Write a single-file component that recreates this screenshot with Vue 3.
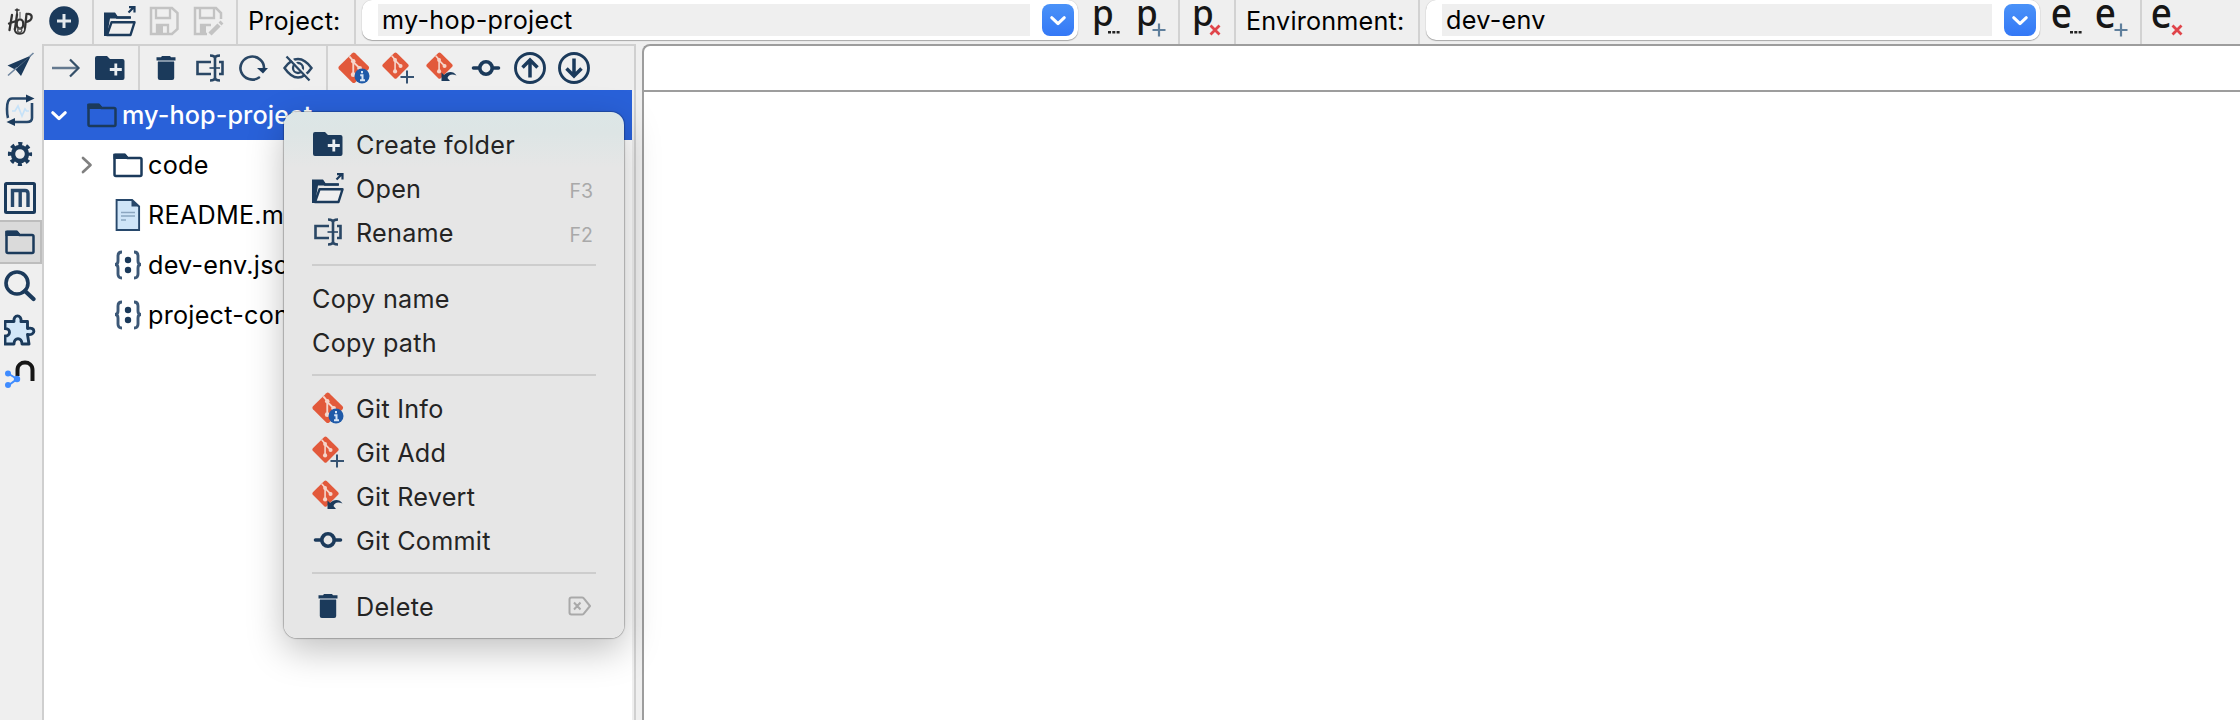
<script setup>
const fileActions = ['open', 'save', 'saveas']
const perspectives = ['plane', 'loop', 'gear', 'meta', 'folder', 'search', 'puzzle', 'neo']
const treeTools = [
  ['arrow', 'newfolder'],
  ['trash', 'rename', 'refresh', 'hide'],
  ['gitinfo', 'gitadd', 'gitrevert', 'commit', 'up', 'down'],
]
const files = [
  { icon: 'folder', name: 'code', dir: true },
  { icon: 'file', name: 'README.md' },
  { icon: 'json', name: 'dev-env.json' },
  { icon: 'json', name: 'project-config.json' },
]
const menu = [
  [
    { icon: 'newfolder', text: 'Create folder' },
    { icon: 'open', text: 'Open', key: 'F3' },
    { icon: 'rename', text: 'Rename', key: 'F2' },
  ],
  [{ text: 'Copy name' }, { text: 'Copy path' }],
  [
    { icon: 'gitinfo', text: 'Git Info' },
    { icon: 'gitadd', text: 'Git Add' },
    { icon: 'gitrevert', text: 'Git Revert' },
    { icon: 'commit', text: 'Git Commit' },
  ],
  [{ icon: 'trash', text: 'Delete', del: true }],
]
</script>

<template>
  <div class="window">
    <svg class="defs" width="0" height="0">
      <symbol id="hop" viewBox="0 0 32 32">
        <g fill="none" stroke="#333" stroke-width="2.300" stroke-linecap="round">
          <path d="M8 10L5.500 25M13 9.500L11 24M5 18.500l7-2.500" />
          <ellipse cx="16" cy="19" rx="3.300" ry="4.600" />
          <path d="M13 4v6M11.500 5h3.500" stroke-width="1.600" />
          <path d="M16 7.500v5" stroke-width="1.300" stroke="#777" />
          <path d="M22.500 9l-1.500 14M22.500 9c7-1.500 7 7-.5 8" />
          <path d="M10.500 24c1 6.500 10 6.500 10.500 0" stroke-width="1.700" />
          <circle cx="15.700" cy="25.500" r="2" stroke-width="1.400" stroke="#555" />
        </g>
      </symbol>
      <symbol id="add" viewBox="0 0 32 32">
        <circle cx="16" cy="16" r="14.800" fill="#1b3a5b" />
        <path d="M16 9v14M9 16h14" stroke="#e4e9ee" stroke-width="3" />
      </symbol>
      <symbol id="open" viewBox="0 0 32 32">
        <path d="M1.500 30.500V9.500h9l2.500 3h14" fill="none" stroke="#1b3a5b" stroke-width="2.500" />
        <path d="M0 7.500h11l2.500 4H26v2H6L3 31H0z" fill="#1b3a5b" />
        <path d="M7.500 17.300h23L26.500 30H3z" fill="#efefef" stroke="#1b3a5b" stroke-width="2.400" stroke-linejoin="round" />
        <path d="M24.500 7.500l5-5M25 2.200h5.500V7.500" fill="none" stroke="#1b3a5b" stroke-width="2.200" />
      </symbol>
      <symbol id="save" viewBox="0 0 32 32">
        <path d="M3 3h21l5.500 5v16l-5.500 5H3z" fill="none" stroke="#c3c3c3" stroke-width="2.500" />
        <path d="M8 3v10h14V3M9 29v-9h11v9" fill="none" stroke="#c3c3c3" stroke-width="2.300" />
        <path d="M9 20h6v9H9z" fill="#c3c3c3" />
      </symbol>
      <symbol id="saveas" viewBox="0 0 32 32">
        <path d="M15 29H3V3h21l5 5v6" fill="none" stroke="#c3c3c3" stroke-width="2.500" />
        <path d="M8 3v10h14V3M9 29v-9h10" fill="none" stroke="#c3c3c3" stroke-width="2.300" />
        <path d="M9 20h5v9H9z" fill="#c3c3c3" />
        <path d="M18 29l9-9" stroke="#c3c3c3" stroke-width="4.500" />
        <path d="M28 19l2-2" stroke="#c3c3c3" stroke-width="4" />
      </symbol>
      <symbol id="plane" viewBox="0 0 32 32">
        <path d="M27 5.500L3.500 15.500l7.500 4zM27 5.500L11.500 19.500l5.500 6.500z" fill="#1b3a5b" />
        <path d="M4 25.500l9-8M25 7l4.500-4" stroke="#7187a0" stroke-width="1.600" />
      </symbol>
      <symbol id="loop" viewBox="0 0 32 32">
        <g fill="none" stroke="#27486b" stroke-width="2.600">
          <path d="M4 24q-1-3-1-9Q3 4.500 8 4.500H24M28 9v15q0 4-5 4H9" />
        </g>
        <path d="M22 0.500l8.500 4-8.500 4zM11 24l-8.500 4 8.500 4z" fill="#1b3a5b" />
        <path d="M8 17h3l3-5 4 10 3-7 1.500 2H25" fill="none" stroke="#c6e2f8" stroke-width="1.700" />
      </symbol>
      <symbol id="gear" viewBox="0 0 32 32">
        <circle cx="16" cy="16" r="7" fill="none" stroke="#1b3a5b" stroke-width="4.400" />
        <circle cx="16" cy="16" r="10.200" fill="none" stroke="#1b3a5b" stroke-width="3.800" stroke-dasharray="4 4.011" stroke-dashoffset="2" />
      </symbol>
      <symbol id="meta" viewBox="0 0 32 32">
        <rect x="1.500" y="1.500" width="29" height="29" rx="1" fill="none" stroke="#1b3a5b" stroke-width="3" />
        <path d="M8.500 25V8.500H21q3 0 3 3V25M16.200 9v16" fill="none" stroke="#27486b" stroke-width="3.400" />
      </symbol>
      <symbol id="folder" viewBox="0 0 32 32">
        <path d="M2.500 6H13l2.500 3H28q1.500 0 1.500 1.500V25.500q0 1.500-1.500 1.500H4q-1.500 0-1.500-1.500z" fill="none" stroke="#1b3a5b" stroke-width="2.500" />
        <path d="M1.500 6q0-1.500 1.500-1.500h10l3 3.500v2H1.500z" fill="#1b3a5b" />
      </symbol>
      <symbol id="search" viewBox="0 0 32 32">
        <circle cx="13" cy="13" r="11" fill="none" stroke="#1b3a5b" stroke-width="3.600" />
        <path d="M21 21l8.500 8" stroke="#1b3a5b" stroke-width="4.200" stroke-linecap="round" />
      </symbol>
      <symbol id="puzzle" viewBox="0 0 32 32">
        <path d="M1 7.500h9C9 0 18 0 17 7.500h6.500v7C32 12 32 22 23.500 20.500L25 30h-7c0-7-8-7-8 0H1v-8c6 0 6-7.500 0-7.500z" fill="#d3e7f8" stroke="#1b3a5b" stroke-width="2.900" stroke-linejoin="round" />
      </symbol>
      <symbol id="neo" viewBox="0 0 32 32">
        <path d="M13.500 18v-6c0-10 15-10 15 0v11" fill="none" stroke="#161616" stroke-width="4" />
        <path d="M5 16l8 5-8 6" fill="none" stroke="#3f8cff" stroke-width="2" />
        <g fill="#3f8cff"><circle cx="4" cy="15.500" r="3" /><circle cx="13" cy="21" r="3.200" /><circle cx="4" cy="27" r="3" /></g>
      </symbol>
      <symbol id="arrow" viewBox="0 0 32 32">
        <path d="M2 16h25" stroke="#64798f" stroke-width="2.500" />
        <path d="M20 7.500l8.500 8.500-8.500 8.500" fill="none" stroke="#355069" stroke-width="2.200" />
      </symbol>
      <symbol id="newfolder" viewBox="0 0 32 32">
        <path d="M1 6q0-2 2-2h10l3 3h12.500q2 0 2 2v17q0 2-2 2H3q-2 0-2-2z" fill="#1b3a5b" />
        <path d="M21.800 11.500v12M15.800 17.500h12" stroke="#eaeef2" stroke-width="2.800" />
      </symbol>
      <symbol id="trash" viewBox="0 0 32 32">
        <path d="M12 4h8l1 1.200h4.500v3.200h-19V5.200H11z" fill="#1b3a5b" />
        <path d="M7.800 10h16.400v16q0 2-2 2H9.800q-2 0-2-2z" fill="#1b3a5b" />
        <path d="M8 9.200h16" stroke="#8294a8" stroke-width="1.600" />
      </symbol>
      <symbol id="rename" viewBox="0 0 32 32">
        <path d="M17 10H3.500v12H17M25 10h3.500v12H25" fill="none" stroke="#2a4765" stroke-width="2.600" />
        <path d="M16 3.500q5 0 5 3v19q0 3-5 3M26 3.500q-5 0-5 3M26 28.500q-5 0-5-3" fill="none" stroke="#2a4765" stroke-width="2.600" />
        <path d="M15.500 16H26" stroke="#2a4765" stroke-width="1.600" />
      </symbol>
      <symbol id="refresh" viewBox="0 0 32 32">
        <path d="M26 17A11.800 11.500 0 1 0 21 25.500" fill="none" stroke="#2a4765" stroke-width="2.600" stroke-linecap="round" />
        <path d="M19 16h11l-5 5.500z" fill="#1b3a5b" />
      </symbol>
      <symbol id="hide" viewBox="0 0 32 32">
        <path d="M2.500 16Q9 7 16 7T29.500 16Q23 25.500 16 25.500T2.500 16z" fill="none" stroke="#2a4765" stroke-width="2.400" />
        <circle cx="16" cy="16" r="5" fill="none" stroke="#2a4765" stroke-width="2.300" />
        <path d="M6.500 3.500l22 24" stroke="#efefef" stroke-width="2.200" />
        <path d="M4.500 4.500l23 24" stroke="#2a4765" stroke-width="2.300" />
      </symbol>
      <symbol id="gitmark" viewBox="0 0 32 32">
        <path d="M14.500 1.200q1.500-1.200 3 0L31 14.500q1.200 1.500 0 3L17.500 31q-1.500 1.200-3 0L1 17.500q-1.200-1.500 0-3z" fill="#e2593b" />
        <path d="M11.500 4.500l4 4.500v15M15.500 10l6.500 6.500" fill="none" stroke="#f5d5cb" stroke-width="1.900" />
        <g fill="#f5d5cb"><circle cx="15.500" cy="9.500" r="2.300" /><circle cx="15.500" cy="23" r="2.500" /><circle cx="22" cy="16.500" r="2.400" /></g>
      </symbol>
      <symbol id="gitinfo" viewBox="0 0 32 32">
        <use href="#gitmark" x="0" y="0" width="31.500" height="31.500" />
        <circle cx="24" cy="24" r="7.500" fill="#1f5aa8" />
        <path d="M24 19v2.200M22.200 23.200H24.500v5M22 28.300h5" stroke="#d8e5f5" stroke-width="2" fill="none" />
      </symbol>
      <symbol id="gitadd" viewBox="0 0 32 32">
        <use href="#gitmark" x="0" y="0" width="27" height="27" />
        <path d="M25 18.500v13M18.500 25h13.500" stroke="#365372" stroke-width="2" />
      </symbol>
      <symbol id="gitrevert" viewBox="0 0 32 32">
        <use href="#gitmark" x="0" y="0" width="27" height="27" />
        <path d="M15.500 20.500v8.500h8.500l-2.500-3c1-3 4-4.500 9-2.500-3-4.500-8.500-4.500-12.500-.5z" fill="#1b3a5b" />
      </symbol>
      <symbol id="commit" viewBox="0 0 32 32">
        <path d="M3.500 16H9M23 16h5.500" stroke="#1b3a5b" stroke-width="3.600" stroke-linecap="round" />
        <circle cx="16" cy="16" r="6.200" fill="none" stroke="#1b3a5b" stroke-width="3.600" />
      </symbol>
      <symbol id="up" viewBox="0 0 32 32">
        <circle cx="16" cy="16" r="14.500" fill="none" stroke="#1b3a5b" stroke-width="2.900" />
        <path d="M16 25.500V8M8.500 15.500L16 8l7.500 7.500" fill="none" stroke="#1b3a5b" stroke-width="3.500" />
      </symbol>
      <symbol id="down" viewBox="0 0 32 32">
        <circle cx="16" cy="16" r="14.500" fill="none" stroke="#1b3a5b" stroke-width="2.900" />
        <path d="M16 6.500V24M8.500 16.500L16 24l7.500-7.500" fill="none" stroke="#1b3a5b" stroke-width="3.500" />
      </symbol>
      <symbol id="file" viewBox="0 0 32 32">
        <path d="M4.600 1h15.500l7 6.500V31H4.600z" fill="#cfe5f8" stroke="#27486b" stroke-width="1.900" />
        <path d="M19.500 0.500v7h7.500z" fill="#27486b" />
        <path d="M9 13.500h14M9 17h14M9 21h5" stroke="#8ba6c0" stroke-width="1.500" />
      </symbol>
      <symbol id="json" viewBox="0 0 32 32">
        <path d="M10 3q-4 0-4 4v5q0 3.500-3 3.500 3 0 3 3.500v6q0 4 4 4M22 3q4 0 4 4v5q0 3.500 3 3.500-3 0-3 3.500v6q0 4-4 4" fill="none" stroke="#3c5877" stroke-width="2.900" />
        <circle cx="16" cy="11" r="3.200" fill="#1b3a5b" />
        <circle cx="16" cy="21" r="3.200" fill="#1b3a5b" />
      </symbol>
      <symbol id="chevron" viewBox="0 0 32 32">
        <path d="M9.700 13.700l6.300 6 6.300-6" fill="none" stroke="#fff" stroke-width="3" stroke-linecap="round" stroke-linejoin="round" />
      </symbol>
      <symbol id="dots" viewBox="0 0 32 32">
        <path d="M18 27.300h3M22.300 27.300h3M26.600 27.300h3" stroke="#222" stroke-width="2.400" />
      </symbol>
      <symbol id="plus" viewBox="0 0 32 32">
        <path d="M25 18.500v13M18.500 25h13" stroke="#5f7f9c" stroke-width="2.200" />
      </symbol>
      <symbol id="cross" viewBox="0 0 32 32">
        <path d="M20.500 20.500l9 9M29.500 20.500l-9 9" stroke="#e0444a" stroke-width="2.800" />
      </symbol>
    </svg>

    <header class="topbar">
      <span class="tool first"><svg class="ic"><use href="#hop" /></svg></span>
      <span class="tool"><svg class="ic"><use href="#add" /></svg></span>
      <i class="sep"></i>
      <span v-for="a in fileActions" :key="a" class="tool"><svg class="ic"><use :href="'#' + a" /></svg></span>
      <i class="sep"></i>
      <label class="label project">Project:</label>
      <i class="sep"></i>
      <div class="combo c1">
        <div class="field">my-hop-project</div>
        <svg class="drop"><use href="#chevron" /></svg>
      </div>
      <span v-for="b in ['dots', 'plus']" :key="'p' + b" class="tool">
        <svg class="ic"><text class="p" transform="translate(1.900 20.900) scale(.95 1)">p</text><use :href="'#' + b" /></svg>
      </span>
      <i class="sep"></i>
      <span class="tool"><svg class="ic"><text class="p" transform="translate(1.900 20.900) scale(.95 1)">p</text><use href="#cross" /></svg></span>
      <i class="sep"></i>
      <label class="label env">Environment:</label>
      <i class="sep"></i>
      <div class="combo c2">
        <div class="field">dev-env</div>
        <svg class="drop"><use href="#chevron" /></svg>
      </div>
      <span v-for="b in ['dots', 'plus']" :key="'e' + b" class="tool">
        <svg class="ic"><text class="e" transform="translate(-1.300 22.500) scale(.9 1)">e</text><use :href="'#' + b" /></svg>
      </span>
      <i class="sep"></i>
      <span class="tool"><svg class="ic"><text class="e" transform="translate(-1.300 22.500) scale(.9 1)">e</text><use href="#cross" /></svg></span>
    </header>

    <main class="body">
      <nav class="side">
        <span v-for="p in perspectives" :key="p" class="tool" :class="{ active: p === 'folder' }">
          <svg class="ic"><use :href="'#' + p" /></svg>
        </span>
      </nav>

      <section class="explorer">
        <div class="tools">
          <template v-for="(g, i) in treeTools" :key="i">
            <i v-if="i" class="sep"></i>
            <span v-for="t in g" :key="t" class="tool"><svg class="ic"><use :href="'#' + t" /></svg></span>
          </template>
        </div>
        <div class="tree">
          <div class="row root">
            <svg class="caret"><use href="#chevron" /></svg>
            <svg class="ic"><use href="#folder" /></svg>
            <span class="name">my-hop-project</span>
          </div>
          <div v-for="f in files" :key="f.name" class="row child">
            <svg class="caret" viewBox="0 0 32 32">
              <path v-if="f.dir" d="M13 9l7.500 7-7.500 7" fill="none" stroke="#808080" stroke-width="2.700" stroke-linecap="round" stroke-linejoin="round" />
            </svg>
            <svg class="ic"><use :href="'#' + f.icon" /></svg>
            <span class="name">{{ f.name }}</span>
          </div>
        </div>
      </section>

      <section class="editor"><div class="tabs"></div></section>
    </main>

    <div class="menu">
      <template v-for="(g, i) in menu" :key="i">
        <hr v-if="i" />
        <div v-for="m in g" :key="m.text" class="item">
          <svg v-if="m.icon" class="ic"><use :href="'#' + m.icon" /></svg>
          <span class="text">{{ m.text }}</span>
          <span v-if="m.key" class="key">{{ m.key }}</span>
          <svg v-if="m.del" class="del" viewBox="0 0 24 20">
            <path d="M3.500 1.500h10.500q1 0 1.600.7l6.400 7.800-6.400 7.800q-.6.700-1.600.700H3.500q-2 0-2-2v-13q0-2 2-2zM6 6.500l6.500 7M12.500 6.500l-6.500 7" fill="none" stroke="#a9a9a9" stroke-width="2" stroke-linejoin="round" />
          </svg>
        </div>
      </template>
    </div>
  </div>
</template>

<style>
body { margin: 0; overflow: hidden; }
</style>

<style scoped>
.window {
  position: relative;
  width: 2240px;
  height: 720px;
  overflow: hidden;
  display: flex;
  flex-direction: column;
  background: #efefef;
  font-family: Inter, "Liberation Sans", sans-serif;
  font-size: 25.2px;
  letter-spacing: .2px;
  color: #000;
}
.defs { position: absolute; }
.ic { width: 32px; height: 32px; flex: none; display: block; overflow: visible; }
.topbar { height: 44px; flex: none; display: flex; }
.tool { width: 44px; height: 44px; flex: none; display: flex; align-items: center; justify-content: center; box-sizing: border-box; }
.topbar .tool { height: 42px; }
.first { margin-left: -2px; }
.sep { width: 2px; margin: 0 4px 0 6px; background: #d2d2d2; flex: none; }
.label { display: flex; align-items: center; height: 42px; padding-left: 6px; box-sizing: border-box; white-space: nowrap; }
.project { width: 106px; }
.env { width: 172px; }
.combo {
  height: 40px;
  box-sizing: border-box;
  background: #fff;
  border-radius: 10px;
  box-shadow: 0 1px 1px rgba(0, 0, 0, .28), 0 0 1px rgba(0, 0, 0, .25);
  display: flex;
  padding: 4px 4px 4px 16px;
  gap: 12px;
  flex: none;
}
.c1 { width: 716px; margin: 0 6px 0 2px; }
.c2 { width: 614px; margin: 0 6px 0 2px; }
.field { flex: 1; background: #efefef; display: flex; align-items: center; padding: 1px 0 0 4px; line-height: 31px; letter-spacing: .3px; }
.drop { width: 32px; height: 32px; border-radius: 8px; background: linear-gradient(#4a92f8, #3478f6); }
.p { font: 500 37px "Noto Sans", sans-serif; fill: #161616; letter-spacing: 0; }
.e { font: 500 41px "Noto Sans", sans-serif; fill: #161616; letter-spacing: 0; }

.body { flex: 1; display: flex; }
.side { width: 42px; border-right: 2px solid #cfcfcf; display: flex; flex-direction: column; flex: none; }
.side .tool { width: 42px; padding-right: 2px; }
.side .active { background: #dadada; border: 2px solid #bdbdbd; border-left: 0; padding: 0; }
.explorer { width: 590px; border-top: 2px solid #d0d0d0; border-right: 2px solid #d0d0d0; flex: none; display: flex; flex-direction: column; }
.tools { height: 44px; display: flex; flex: none; }
.tree { flex: 1; background: #fff; margin-right: 2px; }
.row { height: 50px; display: flex; align-items: center; }
.root { background: #2961d9; color: #fff; font-weight: 500; }
.root .caret { margin: 0 11px 0 -1px; }
.caret { width: 32px; height: 32px; flex: none; display: block; }
.child { padding-left: 26px; }
.child .caret { margin-right: 10px; }
.name { margin-left: 4px; white-space: nowrap; }
.root .name { letter-spacing: .1px; }
.child .name { letter-spacing: .25px; }
.editor { flex: 1; margin-left: 6px; border: 2px solid #9d9d9d; border-width: 2px 0 0 2px; border-top-left-radius: 8px; background: #fff; }
.tabs { height: 44px; border-bottom: 2px solid #9d9d9d; }

.menu {
  position: absolute;
  left: 284px;
  top: 112px;
  width: 340px;
  height: 526px;
  box-sizing: border-box;
  padding: 10px 28px;
  border-radius: 13px;
  background: linear-gradient(#dce6e6 0, #dde5e5 20px, #e6e6e6 56px);
  box-shadow: 0 0 1px 1px rgba(0, 0, 0, .24), 0 12px 36px rgba(0, 0, 0, .25);
  color: #242424;
}
.item { height: 44px; display: flex; align-items: center; white-space: nowrap; letter-spacing: .25px; }
.item .ic { margin-right: 12px; }
.item .text { position: relative; top: 1px; }
hr { border: 0; height: 2px; margin: 10px 0; background: #cdcdcd; }
.key { margin-left: auto; margin-right: 3px; font-size: 19.500px; letter-spacing: 0; color: #a9a9a9; position: relative; top: 3px; }
.del { width: 24px; height: 20px; margin-left: auto; margin-right: 4px; }
</style>
